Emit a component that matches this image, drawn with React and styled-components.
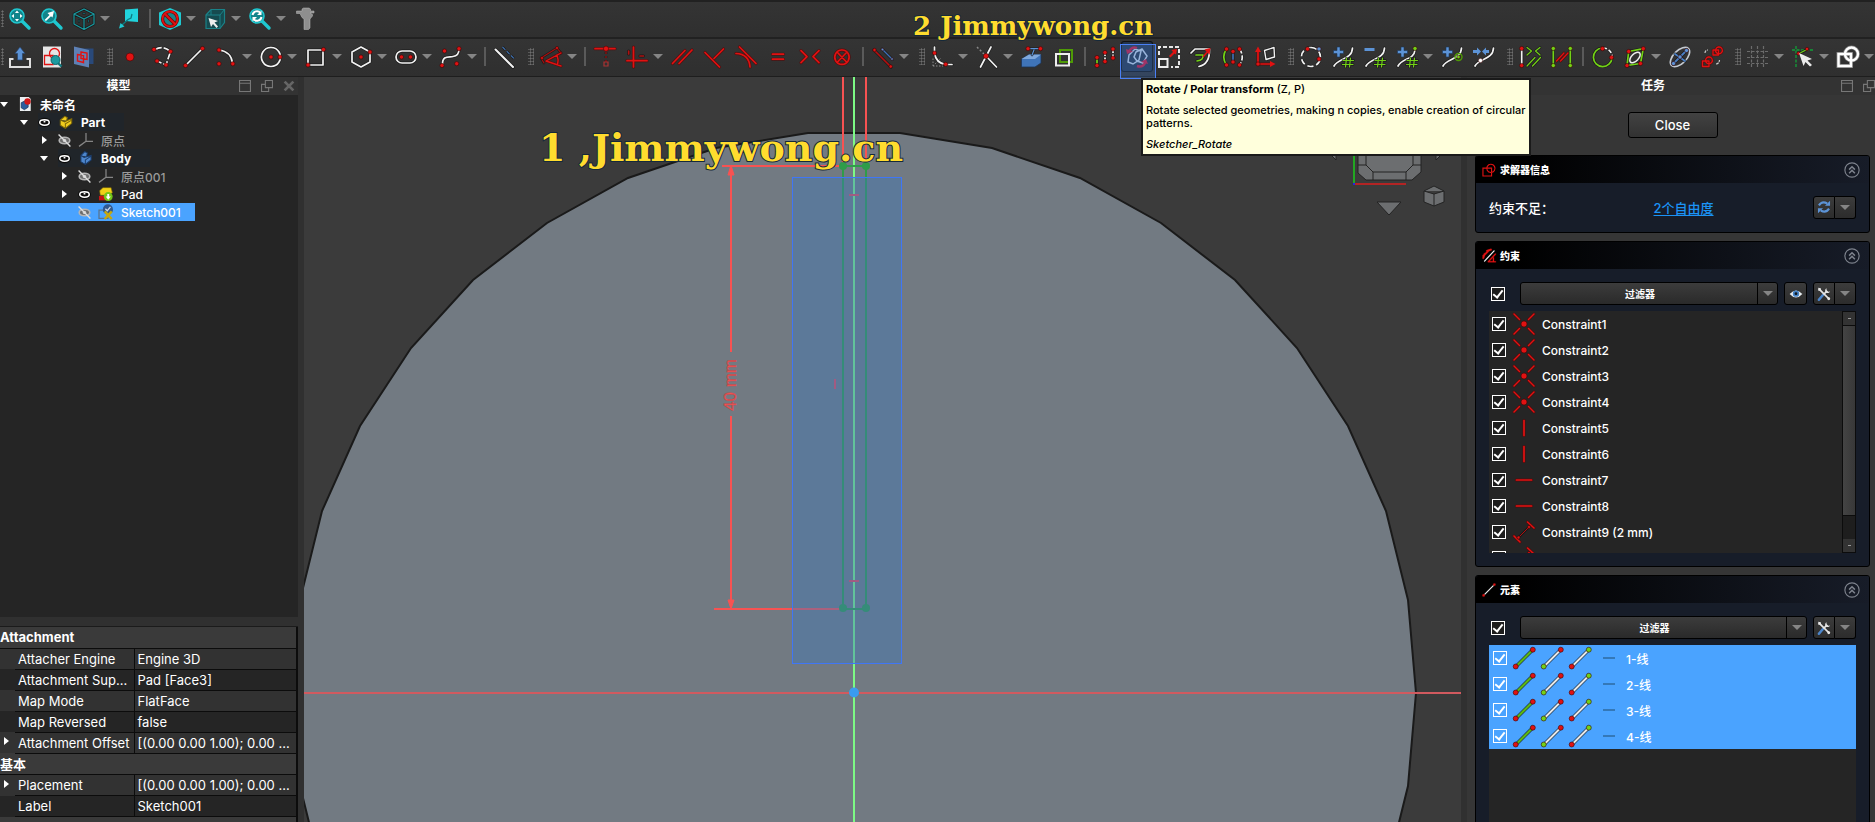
import React from 'react'
import styled, { createGlobalStyle, css } from 'styled-components'

const GlobalStyle = createGlobalStyle`
* {
box-sizing: border-box;
}
body {
margin: 0;
background: #343434;
color: #fff;
font-family: Inter, "Noto Sans CJK SC", sans-serif;
font-size: 12px;
overflow: hidden;
}
button, select, input {
font-family: inherit;
color: inherit;
margin: 0;
}
`

/* ---------- icons ---------- */

const RED = '#e01212'
const GREEN = '#73d216'
const BLUE = '#5c93d6'
const WHITE = '#f2f2f2'
const TEAL = '#1fc8d0'

const Dot = ({ x, y, c = RED, r = 2.1 }) => (
  <circle cx={x} cy={y} r={r} fill={c} stroke="#3a0606" strokeWidth="0.6" />
)

const P = ({ d, c = WHITE, w = 1.7, dash }) => (
  <g fill="none" strokeLinecap={dash ? 'butt' : 'round'} strokeLinejoin="round">
    <path d={d} stroke={c === RED ? '#5c0505' : '#141414'} strokeOpacity="0.75" strokeWidth={w + 1.4} strokeDasharray={dash} />
    <path d={d} stroke={c} strokeWidth={w} strokeDasharray={dash} />
  </g>
)

const Plus = () => <path d="M5 1h3v3.500h3.500v3H8v3.500H5V7.500H1.500v-3H5z" fill={BLUE} stroke="#1c3557" strokeWidth="0.6" />
const Hash = () => <P c={GREEN} w={1.2} d="M14.500 12 L13.500 21 M18.500 12 L17.500 21 M11 14.500 H21.500 M10.500 18.500 H21" />
const Lens = () => (
  <g>
    <path d="M13 13 L20 20" stroke={TEAL} strokeWidth="3.4" strokeLinecap="round" />
    <circle cx="8" cy="8" r="7" fill="#12848b" stroke={TEAL} strokeWidth="1.6" />
  </g>
)

const icons = {
  fitAll: <g><Lens /><path d="M8 2.500 L10 5 H6z M8 13.500 L10 11 H6z M2.500 8 L5 6 V10z M13.500 8 L11 6 V10z" fill="#fff" /></g>,
  fitSel: <g><Lens /><path d="M3.500 12 L8.500 7 L6.500 5 L13 3 L11.500 9.500 L10 8.200 L5 13z" fill="#fff" /></g>,
  cube: <g><P c="#189aa1" w={1.2} d="M11 1 L21 6 V16 L11 21.500 L1 16 V6z M1 6 L11 11 L21 6 M11 11 V21" /><P c="#126c72" w={0.8} d="M6 12 V14 M15.500 12 V14 M10 5.500 H12" /></g>,
  sendTo: <g><path d="M7 1.500 L20 0.500 V14 L7 13z" fill="#21d3dc" /><path d="M14 6 L13 10 L10 11.500 L4 17" stroke="#0e7c82" strokeWidth="1.300" fill="none" /><path d="M1 20.500 L2.500 15 L6.500 18.500z" fill={TEAL} /></g>,
  drawStyle: <g><path d="M11 0 L22 4.500 V17 L11 22 L0 17 V4.500z" fill={TEAL} /><g fill="none" stroke="#6e0606"><circle cx="11" cy="11" r="7.500" fill="#1b8388" strokeWidth="3.200" /><path d="M5.500 5.500 L16.500 16.500" strokeWidth="3.600" /></g><g fill="none" stroke={RED}><circle cx="11" cy="11" r="7.500" strokeWidth="1.800" /><path d="M5.500 5.500 L16.500 16.500" strokeWidth="2" /></g></g>,
  boxSel: <g><path d="M2 7 L7 1.500 H20.500 V14.500 L16 20.500 H2z" fill="#164b50" stroke="#1a8288" strokeWidth="1.200" /><path d="M2 7 H16 V20.500 M16 7 L20.500 1.500 M7 2 V7" fill="none" stroke="#1a8288" /><path d="M4.500 10 L14 13 L10.500 14.500 L14 18.500 L12.500 20 L9 16 L7 19z" fill="#eee" /></g>,
  refresh: <g><Lens /><path d="M3.500 7 A4.500 4.500 0 0 1 11.500 5 M12.500 9 A4.500 4.500 0 0 1 4.500 11" fill="none" stroke="#fff" strokeWidth="2" /><path d="M12.500 2.500 V7 H8z M3.500 13.500 V9 H8z" fill="#fff" /></g>,
  caliper: <path d="M8 1 L9.500 0 H15 L16.500 1 V3 H20 V5 H16 L18.500 6.500 V8 L16 11 V20 L14.500 21.500 H10 V11 L8 9.500 L6 5.500 H2.500 V3 H8z" fill="#8e8e8e" stroke="#bdbdbd" strokeWidth="0.500" />,

  leave: <g><path d="M4.500 13 H1 V21 H21 V13 H17.500" fill="none" stroke="#dedede" strokeWidth="2" /><path d="M11 1 L16 7.500 H13.500 V14 H8.500 V7.500 H6z" fill={BLUE} stroke="#27436b" strokeWidth="0.700" /></g>,
  viewSketch: <g><path d="M2 0.500 H20 V21.500 H2z" fill="#e6e6e6" /><path d="M3.500 9.500 H12 V18.500 H3.500z" fill="none" stroke={RED} strokeWidth="1.300" /><circle cx="13.500" cy="7.500" r="5" fill="none" stroke={RED} strokeWidth="1.300" /><path d="M17 17 L20.500 20.500" stroke="#11777d" strokeWidth="2.400" /><circle cx="14.500" cy="14" r="4.500" fill="#1d9aa0" stroke="#0f6368" /></g>,
  section: <g><path d="M4 2.500 H20.500 V18 H4z" fill="#29497a" /><path d="M1 0.500 L16 4 V21.500 L1 18z" fill="#5d80b5" /><path d="M4.500 8.500 L10.500 9.500 V16.500 L4.500 15z M8 6 L14 7 V13.500 L8 12.500z" fill="none" stroke={RED} strokeWidth="1.400" /></g>,

  point: <Dot x="11" y="11" r="4" />,
  polyline: <g><P d="M4 3.500 Q12 -1 19.500 5.500 L15 19 L6 15" dash="7 2" /><Dot x="3" y="3.500" /><Dot x="19.500" y="5.500" /><Dot x="15" y="19" /><Dot x="6" y="15" /></g>,
  line: <g><P d="M3 19 L19 3" /><Dot x="2.500" y="19.500" /><Dot x="19.500" y="2.500" /></g>,
  arc: <g><P d="M4 4 Q16 5.500 17.500 17" /><Dot x="4" y="4" /><Dot x="17.800" y="17.800" /><Dot x="4" y="17.800" /></g>,
  circle: <g><P d="M11 1.500 A9.500 9.500 0 1 1 10.900 1.500" /><Dot x="11" y="11" /><Dot x="20" y="11" /></g>,
  rect: <g><P d="M3 4 H18 V19 H3z" /><Dot x="18.500" y="3.500" /><Dot x="3" y="19" /></g>,
  hexagon: <g><P d="M11 1 L20 6 V16 L11 21 L2 16 V6z" /><Dot x="11" y="11" /><Dot x="20" y="6" /></g>,
  slot: <g><P d="M7 5 H15 A6 6 0 0 1 15 17 H7 A6 6 0 0 1 7 5" /><Dot x="6.500" y="11" /><Dot x="15.500" y="11" /></g>,
  spline: <g><P d="M2.500 19 C2 9 9 11.500 13 10.500 C18 10 19 7 19 3" /><Dot x="2" y="19.500" /><Dot x="19" y="2.700" /><Dot x="4.500" y="5" /><Dot x="16.700" y="17.700" /></g>,
  construction: <g><P w={2} d="M1.500 3.500 L19 21" /><P c="#3f6fae" w={1.2} dash="4 2" d="M8.500 1 L21 13.500" /></g>,

  dimension: <g><P c="#a80f0f" w={1.2} d="M1 12 L17 2 M17 2 L21 7 M1 12 L4 17" /><P c={RED} w={1.4} d="M21 7 L6 15 L21 20 M17 9 Q19 14 17.500 19" /><Dot x="2" y="12" r="1.500" /><Dot x="17" y="2" r="1.500" /></g>,
  coincident: <g><P c={RED} d="M1 2.700 H21" /><Dot x="12" y="2.700" r="2.600" /><P c="#a51010" w={1.200} dash="2 2" d="M12 6 V16" /><path d="M10 16 h4 v4 h-4z" fill="none" stroke="#a33" strokeWidth="1.200" /></g>,
  horVer: <g><P c={RED} d="M7.500 1 V21 M1 14.700 H21" /><P c="#b01010" d="M2.700 5 V8 M14 10 H17.500" /></g>,
  parallel: <P c={RED} d="M1.500 17.500 L14 4.500 M8 17.500 L21 4" />,
  perp: <P c={RED} d="M2 6.500 L16.500 21 M20.500 3 L11 12.500" />,
  tangent: <P c={RED} d="M4.500 1 L21 17.500 M1 7.500 Q14 8 15 21" />,
  equal: <P c={RED} d="M5.500 8.200 H16.500 M5.500 13.200 H16.500" />,
  symmetric: <P c={RED} d="M2 4.700 L8 10.700 L2 16.700 M20 4.700 L14 10.700 L20 16.700" />,
  block: <P c={RED} d="M11 4 A7.200 7.200 0 1 1 10.900 4 M6 6 L16 16.500 M16 6 L6 16.500" />,
  toggle: <g><P c="#b50f0f" d="M2 4 L19 21" /><P c="#3f6fb5" w={1.400} d="M10 3 L20.500 13.500" /><Dot x="2.500" y="4" r="1.700" /><Dot x="18.700" y="20.500" r="1.700" /><Dot x="20" y="13" r="1.300" c={BLUE} /><Dot x="10.500" y="3.500" r="1.300" c={BLUE} /></g>,

  fillet: <g><path d="M2 20 V12 M2 20 H12 M2 20 L10 12" stroke="#888" strokeDasharray="1.500 1.500" /><P d="M3.500 1 V7 Q5 17 14.500 18.500 H21" /><Dot x="3.500" y="7" /><Dot x="14.700" y="18.300" /></g>,
  trim: <g><path d="M1 1 L10 10" stroke="#888" strokeWidth="1.500" strokeDasharray="2 2" /><P d="M15 1 L4.500 21 M10 10 L20.500 21" /><Dot x="10" y="10" r="2.600" /></g>,
  external: <g><path d="M0.500 13 L8 8.500 H20 V17 L14 21 H0.500z" fill="#3f74b8" stroke="#1d3557" strokeWidth="0.800" /><path d="M0.500 13 L8 8.500 H20 L14 13z" fill="#7fa9dd" /><P c={BLUE} w={1.200} d="M7 2.700 H19 M13 4 L11 9" /><Dot x="7" y="2.700" /><Dot x="19.500" y="2.700" /></g>,
  carbon: <g><path d="M7 4 H19 V16 H7z" fill="none" stroke="#4e9a06" strokeWidth="2" /><path d="M3 8 H16 V19.500 H3z" fill="none" stroke="#eee" strokeWidth="2" /></g>,
  array: <g><P c={GREEN} d="M3 12 V19" /><P d="M11 7 V15 M19 4 V12" dash="3 1.500" /><Dot x="3" y="11.500" /><Dot x="3" y="19.500" /><Dot x="11" y="6.500" /><Dot x="11" y="15.500" /><Dot x="19" y="3" /><Dot x="19" y="12" /></g>,
  rotate: <g><path d="M3 9 L9 3 L15 5 L13 14 L7 18 L2 16z M10 6 L16 3 L21 10 L17 17 L11 15 L8 11z" fill="none" stroke="#b9c8dc" strokeWidth="1.500" /><path d="M2.500 6 Q6 0 11 2" fill="none" stroke="#c2183a" strokeWidth="2.400" /><path d="M0 3 L7 5.500 L1 8z" fill="#c2183a" /><path d="M19.500 16 Q17 22 11 20" fill="none" stroke="#c2183a" strokeWidth="2.400" /><path d="M22 18 L15 16 L20 13z" fill="#c2183a" /></g>,
  scale: <g><path d="M1 9 V1 H21 V21 H13" fill="none" stroke="#e6e6e6" strokeWidth="2" strokeDasharray="4 2" /><path d="M1 13 H9.500 V21 H1z" fill="none" stroke="#eee" strokeWidth="2" /><path d="M11 10 L15 6 L13.500 4 L19 3 L18 8.500 L16.500 7.500 L12.500 11.500z" fill={RED} /></g>,
  offset: <g><P d="M1 7 L5 3 H19.500 Q20 18 9 20.500" /><P c={GREEN} d="M6 9 H13 Q14 14 7 15" /><path d="M13 11 L19 4 M19.500 3 L16 4 L19 7z" stroke={RED} strokeWidth="1.600" fill={RED} /></g>,
  mirror: <g><P c={GREEN} d="M4.500 3 Q-1 11 4.500 19" /><P d="M17.500 3 Q23 11 17.500 19" dash="5 2" /><P c="#3f6fb5" d="M11 6 V15" /><Dot x="4.500" y="3" /><Dot x="4.500" y="19" /><Dot x="17.500" y="3" /><Dot x="17.500" y="19" /><Dot x="11" y="5.500" /><Dot x="11" y="16" /></g>,
  removeAxes: <g><P d="M10.500 4.500 L20 1.500 L20.500 11 L12 13.500z" w={1.400} /><P c={RED} d="M4 4 V18 H18" /><path d="M4 0.500 L7 6 H1z M21.500 18 L16 15 V21z" fill={RED} /><Dot x="4" y="18" /></g>,

  nurbs: <g><P d="M11 1.500 A9.500 9.500 0 1 1 10.900 1.500" dash="6 3" /><Dot x="7.500" y="3" /><Dot x="19" y="13" /><Dot x="19" y="3" c={BLUE} /></g>,
  degreeUp: <g><P d="M2 20 C6 12 20 14 20.500 2" /><Plus /><Hash /></g>,
  degreeDown: <g><P d="M2 20 C6 12 20 14 20.500 2" /><path d="M0.500 2 h10 v3 h-10z" fill={BLUE} /><Hash /></g>,
  knotUp: <g><P d="M2 20 C6 12 18 14 19 4" /><Plus /><Hash /><Dot x="19" y="2.500" c={GREEN} /></g>,
  insertKnot: <g><P d="M2 20 C6 12 20 14 20.500 2" /><Plus /><circle cx="17.500" cy="11" r="3.500" fill="none" stroke="#4e9a06" strokeWidth="1.400" /><Dot x="17.500" y="11" c={GREEN} r="1.800" /></g>,
  join: <g><P d="M2 20 C6 12 20 14 20.500 2" /><path d="M0 4 H4 V1.500 L8 5.500 L4 9.500 V7 H0z M16 4 H13 V1.500 L9 5.500 L13 9.500 V7 H16z" fill={BLUE} /><Dot x="7.500" y="14.500" c="#fff" r="2.200" /></g>,
  conConstr: <g><P d="M2.700 3 V19" /><Dot x="2.700" y="2.500" /><Dot x="2.700" y="19.500" /><P c={GREEN} w={1.200} d="M8 1.500 L12.500 5 L8 9 M21 1.500 L16.500 5 L21 9 M8 20 L16 11.500 M13.500 20 L21.500 11.500" /></g>,
  conElems: <g><P c={GREEN} d="M2.300 3 V19 M19.300 3 V19" /><P c={RED} w={1.200} d="M5.500 15 L13 7 M9.500 15 L17 7" /><Dot x="2.300" y="2.500" c={GREEN} /><Dot x="2.300" y="19.500" c={GREEN} /><Dot x="19.300" y="2.500" c={GREEN} /><Dot x="19.300" y="19.500" c={GREEN} /></g>,
  dof: <g><P d="M11 2 A9.300 9.300 0 0 1 20.300 11" dash="4 2" /><P c={GREEN} d="M20 12 A9.300 9.300 0 1 1 10 2" /><Dot x="10.500" y="2.700" /><Dot x="19.500" y="11.500" /></g>,
  internal: <g><P c={GREEN} d="M4.700 5.500 L19.300 2.700 L16.500 17.500 L3 19.500z" /><ellipse cx="11" cy="11.500" rx="6.500" ry="3.500" transform="rotate(-45 11 11.500)" fill="none" stroke="#eee" strokeWidth="1.500" /><Dot x="4.700" y="5.500" /><Dot x="19.300" y="2.700" /><Dot x="16.500" y="17.500" /><Dot x="3" y="19.500" /></g>,
  ellipse: <g><ellipse cx="11" cy="11" rx="12" ry="6.500" transform="rotate(-45 11 11)" fill="none" stroke="#c4cad2" strokeWidth="1.600" /><P c="#4a7fc4" w={1.800} d="M4 18 L18 4 M6 8 L16 15" /><Dot x="4.500" y="17.500" c={BLUE} /><Dot x="17.500" y="4.500" c={BLUE} /><Dot x="11" y="11" c={BLUE} /></g>,
  copies: <g><P c={RED} w={1.300} d="M12 4 H17.500 V9 H12z M18 1 A3.400 3.400 0 1 1 17.900 1 M1.500 15 H8 V20.500 H1.500z M8 11 A3.400 3.400 0 1 1 7.900 11" /><path d="M4 7 Q4 4 7 4 M15 18 Q18 18 18.500 14" fill="none" stroke="#ccc" strokeWidth="1.200" strokeDasharray="3 1" /></g>,
  grid: <path d="M0 5.500 H22 M0 11.500 H22 M0 17.500 H22 M4.500 0 V22 M10.500 0 V22 M16.500 0 V22" stroke="#6c6c6c" strokeWidth="1.200" strokeDasharray="3 1.500" />,
  snap: <g><path d="M4 0 V22 M0 4 H22" stroke="#11a038" strokeWidth="1.300" strokeDasharray="3 1.500" /><P c={GREEN} w={1.200} d="M8 7 L15 3.500" /><Dot x="6.500" y="7.500" r="1.700" /><Dot x="15" y="3" r="1.700" /><path d="M7 7 L20 13 L15.500 14.500 L20 19 L18 20.500 L13.500 16 L11.500 20z" fill="#ececec" /></g>,
  order: <g fill="none"><path d="M1.500 8 H14 V20 H1.500z" stroke="#7a7a7a" strokeWidth="4" /><circle cx="14.500" cy="8" r="6.500" stroke="#7a7a7a" strokeWidth="4" /><path d="M1.500 8 H14 V20 H1.500z" stroke="#fff" strokeWidth="2.400" /><circle cx="14.500" cy="8" r="6.500" stroke="#fff" strokeWidth="2.400" /></g>,

  conPoint: <g><P c={RED} d="M1 1 L6.500 6.500 M21 1 L15.500 6.500 M1 21 L6.500 15.500 M21 21 L15.500 15.500" w={1.400} /><Dot x="11" y="11" r="3" /></g>,
  conVer: <P c={RED} d="M11 3.500 V18.500" />,
  conHor: <P c={RED} d="M3.500 11 H18.500" />,
  conDist: <g><P c={RED} w={1.500} d="M14.500 1 L21 7 M1 15 L7 21" /><P c="#b31010" w={1} d="M5 17 L16.500 5.500" /><Dot x="5.500" y="16.500" r="1.500" /><Dot x="16" y="6" r="1.500" /></g>,
  edge: <g><P c="#5cb811" w={2.2} d="M3 19.500 L20 2.500" /><Dot x="2.700" y="19.500" r="2.500" /><Dot x="19.800" y="2.700" r="2.500" /></g>,
  edgeStart: <g><P c="#e8e8e8" w={2} d="M3 19.500 L20 2.500" /><Dot x="2.700" y="19.500" r="2.500" c={GREEN} /><Dot x="19.800" y="2.700" r="2.500" /></g>,
  edgeEnd: <g><P c="#e8e8e8" w={2} d="M3 19.500 L20 2.500" /><Dot x="2.700" y="19.500" r="2.500" /><Dot x="19.800" y="2.700" r="2.500" c={GREEN} /></g>,
  sketch: <path d="M1.500 8 H15 V20.500 H1.500z M14 2 A6.500 6.500 0 1 1 13.900 2" fill="none" stroke={RED} strokeWidth="1.800" />,
  constraints: <g><P c={RED} w={2.6} d="M2 11 L11 2 M2 14 L4 8 M8 3 L14 1" /><P w={1.800} d="M4 19 L19 3" /><P c={RED} w={1.800} d="M10 20 L21 8 M11 20 H21 M18 14 V20" /></g>,
  eye: <g><path d="M1 11 Q11 0 21 11 Q11 22 1 11z" fill="#e9eef2" /><circle cx="11" cy="10.500" r="5" fill="#4583c6" /><circle cx="11" cy="10.500" r="2.200" fill="#10161f" /></g>,
  tools: <g><path d="M3 3 L18 18" stroke="#e6e6e6" strokeWidth="2.600" /><path d="M2 1 L6 2 L6.500 6 L2 6z" fill="#e6e6e6" /><path d="M9 13 L3 20" stroke="#4c86cc" strokeWidth="4" strokeLinecap="round" /><path d="M10 12 L16 6" stroke="#e6e6e6" strokeWidth="2.600" /><path d="M15 2 A4 4 0 1 0 20.500 7 L17.500 7.500 L15 5z" fill="#e6e6e6" /><circle cx="18.500" cy="18.500" r="2.200" fill="#e6e6e6" /></g>,
  sync: <g fill="none" stroke={BLUE} strokeWidth="3.400"><path d="M3 8.500 Q8 1 16 5.500 M19 13.500 Q14 21 6 16.500" /><path d="M20.500 1 V9 H12.500z M1.500 21 V13 H9.500z" fill={BLUE} stroke="none" /></g>,
  collapse: <g fill="none" stroke="#7d828c" strokeWidth="1.600"><circle cx="11" cy="11" r="9.800" /><path d="M7 10.500 L11 6.500 L15 10.500 M7 15.500 L11 11.500 L15 15.500" strokeWidth="2" /></g>,

  doc: <g><path d="M3 0 H17 L20 3 V22 H3z" fill="#eceff2" /><path d="M5 9 L11 6 L16 9 V16 L10 20 L5 17z" fill="#2c5d9e" stroke="#132c4d" /><circle cx="15" cy="7" r="5" fill="#d21919" /></g>,
  part: <path d="M2 8 L9 2 L13 4 L12 9 L20 6 V13 L10 21 L2 16z M2 8 L9 11 L12 9 M10 21 V14 L20 8" fill="#efcb1d" stroke="#7b6509" strokeWidth="1.600" />,
  body: <path d="M3 7 L9 1 L13 3 L12 9 L19 7 V14 L10 21 L3 17z M3 7 L8 10 L12 9 M10 21 V14 L19 8" fill="#4d86cc" stroke="#1b3d6c" strokeWidth="1.600" />,
  origin: <path d="M11 0 V13 H22 M11 13 L0 21" fill="none" stroke="#858585" strokeWidth="2" />,
  pad: <g><path d="M0 14 H14 V21 H0z" fill="#c41414" /><path d="M1 6 L6 1 H19 L21 9 L14 13 L2 13z" fill="#efd016" stroke="#7b6509" /><circle cx="14.500" cy="15" r="7" fill="#73c718" /><path d="M14.500 20 L10.500 15 H13 V11 H16 V15 H18.500z" fill="#fff" /></g>,
  sketchItem: <g><path d="M0 8 H14 V21 H0z" fill="none" stroke="#58748f" strokeWidth="2" /><circle cx="14" cy="7" r="8" fill="#31598f" /><path d="M10 6 L13 9 L18 3" fill="none" stroke="#ccd9ea" strokeWidth="2" /><path d="M9 10 L20 22 M20 10 L9 22" stroke="#c5a80e" strokeWidth="4" /></g>,
  shown: <g><ellipse cx="11" cy="11" rx="11" ry="8" fill="#0c0c0c" /><ellipse cx="11" cy="11" rx="8" ry="4.500" fill="none" stroke="#fff" strokeWidth="2.600" /><path d="M11 8 V11" stroke="#fff" strokeWidth="3" /></g>,
  hidden: <g><ellipse cx="11" cy="11" rx="9" ry="5.500" fill="#6d6d6d" stroke="#b5b5b5" strokeWidth="2.600" /><circle cx="11" cy="11" r="3" fill="#ccc" /><path d="M1 1 L21 21" stroke="#dedede" strokeWidth="2.400" /></g>,
  float: <path d="M1 1 H21 V21 H1z M1 6 H21" fill="none" stroke="#777" strokeWidth="2" />,
  restore: <path d="M8 1 H21 V14 H8z M8 8 H1 V21 H14 V14" fill="none" stroke="#777" strokeWidth="2" />,
  close: <path d="M3 3 L19 19 M19 3 L3 19" fill="none" stroke="#666" strokeWidth="5" />,
}

const Svg = styled.svg`
display: block;
flex: none;
`

const Icon = ({ name, size = 22 }) => (
  <Svg width={size} height={size} viewBox="0 0 22 22" overflow="visible" aria-hidden="true">{icons[name]}</Svg>
)

/* ---------- window ---------- */

const Window = styled.div`
height: 100vh;
position: relative;
display: flex;
flex-direction: column;
overflow: hidden;
`

const Toolbar = styled.div`
height: ${p => p.$tall ? 40 : 37}px;
flex: none;
display: flex;
align-items: center;
padding: 0 0 2px 1px;
background: linear-gradient(#343434, #2f2f2f);
border-top: 2px solid #212121;
${p => p.$tall && css`
border-bottom: 1px solid #1e1e1e;
`}
`

const Grip = styled.span`
width: ${p => p.$first ? 3 : 14}px;
height: 17px;
flex: none;
background: radial-gradient(circle, #6e6e6e 40%, transparent 60%) right 0 top 0 / 3px 3px;
background-clip: content-box;
padding-left: ${p => p.$first ? 0 : 7}px;
padding-right: ${p => p.$first ? 0 : 1}px;
`

const Separator = styled.span`
width: 9px;
height: 19px;
flex: none;
border-left: 2px solid #5a5a5a;
margin-left: 4px;
margin-right: -4px;
`

const ToolButton = styled.button`
width: 32px;
height: 32px;
flex: none;
display: flex;
align-items: center;
justify-content: center;
padding: 0;
border: 0;
background: none;
position: relative;
${p => p.$active && css`
height: 31px;
border-radius: 3px;
background: #24344a;
box-shadow: inset 0 0 0 1px #111;
&::after {
content: '';
position: absolute;
top: 3px;
left: -1px;
width: 34px;
height: 33px;
border: 1px solid #4a80f5;
background: rgba(70, 130, 220, 0.28);
z-index: 2;
}
`}
`

const MenuButton = styled.button`
width: 13px;
height: 22px;
flex: none;
padding: 0;
border: 0;
background: none;
display: flex;
align-items: center;
`

const Caret = styled.span`
border: 5px solid transparent;
border-top-color: #858585;
border-bottom: 0;
`

const viewTools = ['fitAll', 'fitSel', 'cube*', 'sendTo', '|', 'drawStyle*', 'boxSel*', 'refresh*', 'caliper']

const sketchTools = [
  'leave', 'viewSketch', 'section', ':',
  'point', 'polyline', 'line', 'arc*', 'circle*', 'rect*', 'hexagon*', 'slot*', 'spline*', '|', 'construction', ':',
  'dimension*', '|', 'coincident', 'horVer*', 'parallel', 'perp', 'tangent', 'equal', 'symmetric', 'block', '|', 'toggle*', ':',
  'fillet*', 'trim*', 'external', 'carbon', '|', 'array', 'rotate', 'scale', 'offset', 'mirror', 'removeAxes', ':',
  'nurbs', 'degreeUp', 'degreeDown', 'knotUp*', 'insertKnot', 'join', ':',
  'conConstr', 'conElems', '|', 'dof', 'internal*', 'ellipse', 'copies', ':',
  'grid*', 'snap*', 'order*',
]

const Tools = ({ items }) => items.map((item, i) => {
  if (item === '|') return <Separator key={i} />
  if (item === ':') return <Grip key={i} />
  const name = item.replace('*', '')
  return (
    <React.Fragment key={i}>
      <ToolButton type="button" aria-label={name} $active={name === 'rotate'}><Icon name={name} /></ToolButton>
      {item.endsWith('*') && <MenuButton type="button" aria-label={name + ' menu'}><Caret /></MenuButton>}
    </React.Fragment>
  )
})

const Main = styled.div`
flex: 1;
min-height: 0;
display: flex;
`

/* ---------- docks ---------- */

const DockTitle = styled.div`
height: 18px;
flex: none;
display: flex;
align-items: center;
gap: 10px;
padding-right: ${p => p.$cut ? 0 : 3}px;
background: #333;
`

const DockName = styled.h2`
flex: 1;
margin: 0;
padding-left: 8px;
text-align: center;
font-size: 12px;
line-height: 20px;
font-weight: 700;
`

const DockButton = styled.button`
padding: 0;
border: 0;
background: none;
`

const LeftDock = styled.aside`
width: 304px;
flex: none;
padding-right: 6px;
display: flex;
flex-direction: column;
background: #303030;
`

const Tree = styled.ul`
flex: 1;
min-height: 0;
margin: 0 0 9px;
padding: 0;
list-style: none;
background: #252525;
`

const TreeRow = styled.li`
height: 18px;
width: 195px;
display: flex;
align-items: center;
padding-left: ${p => p.$level * 20}px;
font-weight: ${p => p.$bold ? 700 : 500};
color: ${p => p.$dim ? '#9a9a9a' : '#fff'};
background: ${p => p.$selected ? '#4aa3ff' : 'none'};
white-space: nowrap;
`

const Expander = styled.button`
width: 18px;
height: 18px;
flex: none;
padding: 0;
border: 0;
background: none;
&::before {
content: '';
display: block;
width: 0;
border: 4px solid transparent;
${p => p.$state === 'open' && css`border-top: 5px solid #fff; border-bottom: 0;`}
${p => p.$state === 'closed' && css`border-left: 5px solid #fff; border-right: 0; margin-left: 2px;`}
}
`

const TreeItem = styled.span`
height: 18px;
display: flex;
align-items: center;
gap: 8px;
padding-right: ${p => p.$lit ? 19 : 0}px;
background: ${p => p.$lit ? '#20252a' : 'none'};
`

const tree = [
  { level: 0, state: 'open', icon: 'doc', text: '未命名', bold: true },
  { level: 1, state: 'open', eye: 'shown', icon: 'part', text: 'Part', bold: true, lit: true },
  { level: 2, state: 'closed', eye: 'hidden', icon: 'origin', text: '原点', dim: true },
  { level: 2, state: 'open', eye: 'shown', icon: 'body', text: 'Body', bold: true, lit: true },
  { level: 3, state: 'closed', eye: 'hidden', icon: 'origin', text: '原点001', dim: true },
  { level: 3, state: 'closed', eye: 'shown', icon: 'pad', text: 'Pad' },
  { level: 3, eye: 'hidden', icon: 'sketchItem', text: 'Sketch001', selected: true },
]

const PropertyBox = styled.div`
height: 196px;
flex: none;
overflow: hidden;
border-top: 1px solid #1b1b1b;
`

const Properties = styled.table`
width: 100%;
table-layout: fixed;
border-collapse: collapse;
border-right: 2px solid #0c0c0c;
`

const Group = styled.th`
height: 21px;
padding: 0;
text-align: left;
font-size: 13px;
line-height: 20px;
font-weight: 700;
background: #3a3a3a;
border-bottom: 1px solid #0c0c0c;
`

const PropRow = styled.tr`
background: ${p => p.$alt ? '#252525' : '#323232'};
`

const Branch = styled.td`
width: 15px;
padding: 0 2px;
`

const Cell = styled.td`
height: 21px;
padding: 0 0 0 3px;
overflow: hidden;
white-space: nowrap;
font-size: 13px;
line-height: 20px;
border-bottom: 1px solid #0c0c0c;
border-right: ${p => p.$name ? '1px solid #0c0c0c' : '0'};
`

const properties = [
  { group: 'Attachment' },
  { name: 'Attacher Engine', value: 'Engine 3D' },
  { name: 'Attachment Sup...', value: 'Pad [Face3]', alt: true },
  { name: 'Map Mode', value: 'FlatFace' },
  { name: 'Map Reversed', value: 'false', alt: true },
  { name: 'Attachment Offset', value: '[(0.00 0.00 1.00); 0.00 ...', sub: true },
  { group: '基本' },
  { name: 'Placement', value: '[(0.00 0.00 1.00); 0.00 ...', sub: true },
  { name: 'Label', value: 'Sketch001', alt: true },
  { group: ' ' },
]

/* ---------- 3d view ---------- */

const View = styled.main`
flex: 1;
min-width: 0;
overflow: hidden;
background: #3b3b3b;
svg {
display: block;
width: 100%;
height: 100%;
}
`

const DISC = { x: 550, y: 616, r: 562, sides: 38 }
const discPoints = Array.from({ length: DISC.sides }, (_, i) => {
  const a = (i * 2 * Math.PI) / DISC.sides
  return `${Math.round(DISC.x + DISC.r * Math.cos(a))},${Math.round(DISC.y + DISC.r * Math.sin(a))}`
}).join(' ')

const Scene = () => (
  <svg viewBox="0 0 1157 745" preserveAspectRatio="xMidYMid slice" role="img" aria-label="Sketch view">
    <polygon points={discPoints} fill="#727a82" stroke="#1a1a1a" strokeWidth="2" />
    <path d="M0 616 H1157" stroke="#d15a5f" strokeWidth="2" />
    <path d="M539 0 V89 M562 0 V89 M418 89 H539" stroke="#f75252" strokeWidth="2" />
    <path d="M427 89 V275 M427 339 V531 M410 532 H539" stroke="#f75252" strokeWidth="2" fill="none" />
    <path d="M427 88 L430 98 H424z M427 532 L430 523 H424z" fill="#f75252" stroke="#f75252" />
    <text x="426" y="308" transform="rotate(-90 426 308)" textAnchor="middle" dominantBaseline="central" fontFamily="Liberation Sans, sans-serif" fontSize="17" fill="#f75252" stroke="#b84a4e" strokeWidth="0.500">40 mm</text>
    <path d="M550 0 V745" stroke="#7dfa85" strokeWidth="2" />
    <path d="M539 89 V532 H562 V89z" stroke="#2f9c4a" strokeWidth="2" fill="none" />
    <g fill="#2f9c4a">
      <circle cx="539" cy="89" r="4" /><circle cx="562" cy="89" r="4" />
      <circle cx="539" cy="531" r="4" /><circle cx="562" cy="531" r="4" />
    </g>
    <path d="M545 118 H555 M545 504 H555 M531 302 V312" stroke="#e8485a" strokeWidth="2" />
    <rect x="488.500" y="100.500" width="109" height="486" fill="rgba(62, 120, 185, 0.42)" stroke="#4076f5" />
    <circle cx="550" cy="615.500" r="5" fill="#3a9bf0" />

    <g fill="#6c6e70" stroke="#232323">
      <path d="M1054 60 H1117 V95 L1108 103 H1062 L1054 96z" />
      <path d="M1062 60 V88 L1069 95 H1102 L1109 88 V60 M1054 88 H1062 M1109 88 H1117 M1069 95 V103 M1102 95 V103" fill="none" />
      <path d="M1073 125 H1097 L1085 138z M1026 77 L1032 83 V77z M1138 77 L1132 83 V77z" />
      <path d="M1120 114 L1130 109 L1140 114 V125 L1130 129 L1120 125z M1120 114 L1130 117 L1140 114 M1130 117 V129" />
    </g>
    <path d="M1050 60 V106" stroke="#22a722" strokeWidth="2" />
    <path d="M1050 107 H1102" stroke="#b32424" strokeWidth="2" />
    <rect x="1049" y="106" width="2" height="2" fill="#2424e0" />
  </svg>
)

/* ---------- task panel ---------- */

const RightDock = styled.aside`
width: 414px;
flex: none;
padding-left: 6px;
display: flex;
flex-direction: column;
background: #303030;
`

const TaskArea = styled.div`
flex: 1;
min-height: 0;
display: flex;
flex-direction: column;
padding: 17px 5px 0 8px;
overflow: hidden;
background: #363636;
`

const CloseButton = styled.button`
width: 90px;
height: 26px;
flex: none;
align-self: center;
margin-bottom: 17px;
padding: 0;
border: 1px solid #000;
border-radius: 3px;
background: linear-gradient(#424242, #323232);
font-size: 13px;
font-weight: 500;
`

const Card = styled.section`
flex: ${p => p.$fill ? '0 0 400px' : 'none'};
display: flex;
flex-direction: column;
margin-bottom: 8px;
border: 1px solid #000;
border-radius: 3px;
background: #171d29;
overflow: hidden;
`

const CardHead = styled.header`
height: 27px;
flex: none;
display: flex;
align-items: center;
gap: 4px;
padding: 0 9px 0 6px;
background: linear-gradient(90deg, #000 10%, #171c28);
`

const CardName = styled.h3`
flex: 1;
margin: 0;
font-size: 10px;
line-height: 14px;
font-weight: 900;
`

const CollapseButton = styled.button`
display: block;
padding: 0;
border: 0;
background: none;
`

const SolverRow = styled.div`
height: 49px;
display: flex;
align-items: center;
justify-content: space-between;
padding: 0 13px 1px;
font-size: 13px;
font-weight: 500;
`

const SolverLink = styled.a`
color: #1b93f5;
text-decoration: underline;
text-underline-offset: 2px;
`

const Split = styled.span`
display: flex;
flex: none;
`

const SmallButton = styled.button`
width: ${p => p.$menu ? 21 : 22}px;
height: 23px;
flex: none;
display: flex;
align-items: center;
justify-content: center;
padding: 0;
border: 1px solid #000;
border-left-width: ${p => p.$menu ? 0 : 1}px;
border-radius: ${p => p.$menu ? '0 3px 3px 0' : '3px 0 0 3px'};
background: linear-gradient(#3c3c3c, #2c2c2c);
${p => p.$single && css`
width: 23px;
border-radius: 3px;
`}
`

const CardBody = styled.div`
flex: 1;
min-height: 0;
display: flex;
flex-direction: column;
gap: 6px;
padding: 13px;
`

const FilterRow = styled.div`
height: 23px;
flex: none;
display: flex;
align-items: center;
gap: 6px;
padding-left: 2px;
`

const Check = styled.input`
appearance: none;
width: 14px;
height: 14px;
flex: none;
display: grid;
place-content: center;
border: 1px solid #fff;
background: ${p => p.$clear ? 'none' : '#1d1d1d'};
&:checked::before {
content: '';
width: 4px;
height: 8px;
margin-bottom: 2px;
border: solid #fff;
border-width: 0 2px 2px 0;
transform: rotate(38deg);
}
`

const FilterBox = styled.span`
flex: 1;
height: 23px;
display: flex;
margin-left: 9px;
border: 1px solid #000;
border-radius: 3px;
background: linear-gradient(#3c3c3c, #2a2a2a);
position: relative;
`

const Filter = styled.select`
appearance: none;
flex: 1;
padding: 0 18px 0 0;
border: 0;
background: none;
font-size: 10px;
font-weight: 700;
text-align: center;
text-align-last: center;
option {
color: #000;
}
`

const FilterArrow = styled.span`
position: absolute;
top: 0;
right: 0;
bottom: 0;
width: 20px;
display: flex;
align-items: center;
justify-content: center;
border-left: 1px solid #000;
pointer-events: none;
`

const ListBox = styled.div`
height: ${p => p.$short ? '242px' : 'auto'};
flex: ${p => p.$short ? 'none' : 1};
display: flex;
background: #252525;
overflow: hidden;
`

const List = styled.ul`
flex: 1;
margin: 0;
padding: 0;
list-style: none;
`

const ListRow = styled.li`
height: 26px;
background: ${p => p.$selected ? '#4aa3ff' : 'none'};
label {
height: 26px;
display: flex;
align-items: center;
gap: ${p => p.$selected ? 6 : 7}px;
padding-left: ${p => p.$selected ? 4 : 3}px;
font-size: 12px;
font-weight: 500;
}
`

const Dash = styled.span`
width: 12px;
height: 2px;
margin: 0 5px 0 6px;
background: #3478b8;
`

const ScrollBar = styled.div`
width: 14px;
flex: none;
display: flex;
flex-direction: column;
border: 1px solid #0c0c0c;
background: #1e1e1e;
`

const ScrollEnd = styled.button`
height: 13px;
padding: 0;
border: 0;
background: #333;
display: flex;
align-items: center;
justify-content: center;
&::before {
content: '';
width: 3px;
height: 1px;
background: #999;
}
`

const Thumb = styled.div`
height: 191px;
border: solid #0c0c0c;
border-width: 1px 0;
margin-bottom: auto;
background: linear-gradient(90deg, #444, #383838);
`

const constraints = [
  ['conPoint', 'Constraint1'], ['conPoint', 'Constraint2'], ['conPoint', 'Constraint3'], ['conPoint', 'Constraint4'],
  ['conVer', 'Constraint5'], ['conVer', 'Constraint6'], ['conHor', 'Constraint7'], ['conHor', 'Constraint8'],
  ['conDist', 'Constraint9 (2 mm)'], ['conDist', ''],
]

const elements = ['1-线', '2-线', '3-线', '4-线']

const CardTop = ({ icon, title }) => (
  <CardHead>
    <Icon name={icon} size={14} />
    <CardName>{title}</CardName>
    <CollapseButton type="button" aria-label="Collapse"><Icon name="collapse" size={16} /></CollapseButton>
  </CardHead>
)

const SplitButton = ({ icon }) => (
  <Split>
    <SmallButton type="button" aria-label={icon}><Icon name={icon} size={14} /></SmallButton>
    <SmallButton type="button" aria-label={icon + ' menu'} $menu><Caret /></SmallButton>
  </Split>
)

const FilterBar = ({ children }) => (
  <FilterRow>
    <Check type="checkbox" defaultChecked aria-label="Filter on" />
    <FilterBox>
      <Filter aria-label="过滤器"><option>过滤器</option></Filter>
      <FilterArrow><Caret /></FilterArrow>
    </FilterBox>
    {children}
    <SplitButton icon="tools" />
  </FilterRow>
)

/* ---------- overlays ---------- */

const Tooltip = styled.div`
position: absolute;
top: 78px;
left: 1141px;
width: 390px;
z-index: 3;
padding: 3px;
border: 2px solid #1a1a1a;
background: #ffffdc;
color: #000;
font-size: 11px;
line-height: 13px;
font-weight: 500;
p {
margin: 0 0 8px;
}
p:last-child {
margin: 0;
}
`

const Note = styled.div`
position: absolute;
z-index: 4;
top: ${p => p.$top}px;
left: ${p => p.$left}px;
font-family: "DejaVu Serif", serif;
font-weight: 700;
font-size: ${p => p.$size}px;
line-height: 1;
white-space: nowrap;
color: #ffdc2e;
-webkit-text-stroke: 2px #15293a;
paint-order: stroke fill;
pointer-events: none;
`

const App = () => {
  return (
    <>
      <GlobalStyle />
      <Window>
        <Toolbar><Grip $first /><Tools items={viewTools} /></Toolbar>
        <Toolbar $tall><Grip $first /><Tools items={sketchTools} /></Toolbar>
        <Main>
          <LeftDock>
            <DockTitle>
              <DockName>模型</DockName>
              <DockButton type="button" aria-label="Float"><Icon name="float" size={12} /></DockButton>
              <DockButton type="button" aria-label="Restore"><Icon name="restore" size={12} /></DockButton>
              <DockButton type="button" aria-label="Close panel"><Icon name="close" size={12} /></DockButton>
            </DockTitle>
            <Tree>
              {tree.map((t, i) => (
                <TreeRow key={i} $level={t.level} $bold={t.bold} $dim={t.dim} $selected={t.selected}>
                  <Expander type="button" aria-label="Expand" $state={t.state} />
                  <TreeItem $lit={t.lit}>
                    {t.eye && <Icon name={t.eye} size={13} />}
                    <Icon name={t.icon} size={14} />
                    <span>{t.text}</span>
                  </TreeItem>
                </TreeRow>
              ))}
            </Tree>
            <PropertyBox>
              <Properties>
                <colgroup><col width="15" /><col width="119" /><col /></colgroup>
                <tbody>
                  {properties.map((p, i) => p.group
                    ? <tr key={i}><Group colSpan={3}>{p.group}</Group></tr>
                    : (
                      <PropRow key={i} $alt={p.alt}>
                        <Branch>{p.sub && <Expander type="button" aria-label="Expand" $state="closed" />}</Branch>
                        <Cell $name>{p.name}</Cell>
                        <Cell>{p.value}</Cell>
                      </PropRow>
                    ))}
                </tbody>
              </Properties>
            </PropertyBox>
          </LeftDock>
          <View><Scene /></View>
          <RightDock>
            <DockTitle $cut>
              <DockName>任务</DockName>
              <DockButton type="button" aria-label="Float"><Icon name="float" size={12} /></DockButton>
              <DockButton type="button" aria-label="Restore"><Icon name="restore" size={12} /></DockButton>
            </DockTitle>
            <TaskArea>
              <CloseButton type="button">Close</CloseButton>
              <Card>
                <CardTop icon="sketch" title="求解器信息" />
                <SolverRow>
                  <span>约束不足：</span>
                  <SolverLink href="#dof">2个自由度</SolverLink>
                  <SplitButton icon="sync" />
                </SolverRow>
              </Card>
              <Card>
                <CardTop icon="constraints" title="约束" />
                <CardBody>
                  <FilterBar>
                    <SmallButton type="button" aria-label="Visibility" $single><Icon name="eye" size={14} /></SmallButton>
                  </FilterBar>
                  <ListBox $short>
                    <List>
                      {constraints.map(([icon, text], i) => (
                        <ListRow key={i}>
                          <label><Check type="checkbox" defaultChecked aria-label={'Constraint' + (i + 1)} /><Icon name={icon} />{text}</label>
                        </ListRow>
                      ))}
                    </List>
                    <ScrollBar>
                      <ScrollEnd type="button" aria-label="Scroll up" />
                      <Thumb />
                      <ScrollEnd type="button" aria-label="Scroll down" />
                    </ScrollBar>
                  </ListBox>
                </CardBody>
              </Card>
              <Card $fill>
                <CardTop icon="line" title="元素" />
                <CardBody>
                  <FilterBar />
                  <ListBox>
                    <List>
                      {elements.map(text => (
                        <ListRow key={text} $selected>
                          <label>
                            <Check type="checkbox" defaultChecked $clear />
                            <Icon name="edge" /><Icon name="edgeStart" /><Icon name="edgeEnd" />
                            <Dash />{text}
                          </label>
                        </ListRow>
                      ))}
                    </List>
                  </ListBox>
                </CardBody>
              </Card>
            </TaskArea>
          </RightDock>
        </Main>
        <Tooltip role="tooltip">
          <p><b>Rotate / Polar transform</b> (Z, P)</p>
          <p>Rotate selected geometries, making n copies, enable creation of circular patterns.</p>
          <p><i>Sketcher_Rotate</i></p>
        </Tooltip>
        <Note $top={129} $left={539} $size={38}>1 ,Jimmywong.cn</Note>
        <Note $top={13} $left={913} $size={26}>2 Jimmywong.cn</Note>
      </Window>
    </>
  )
}

export default App
